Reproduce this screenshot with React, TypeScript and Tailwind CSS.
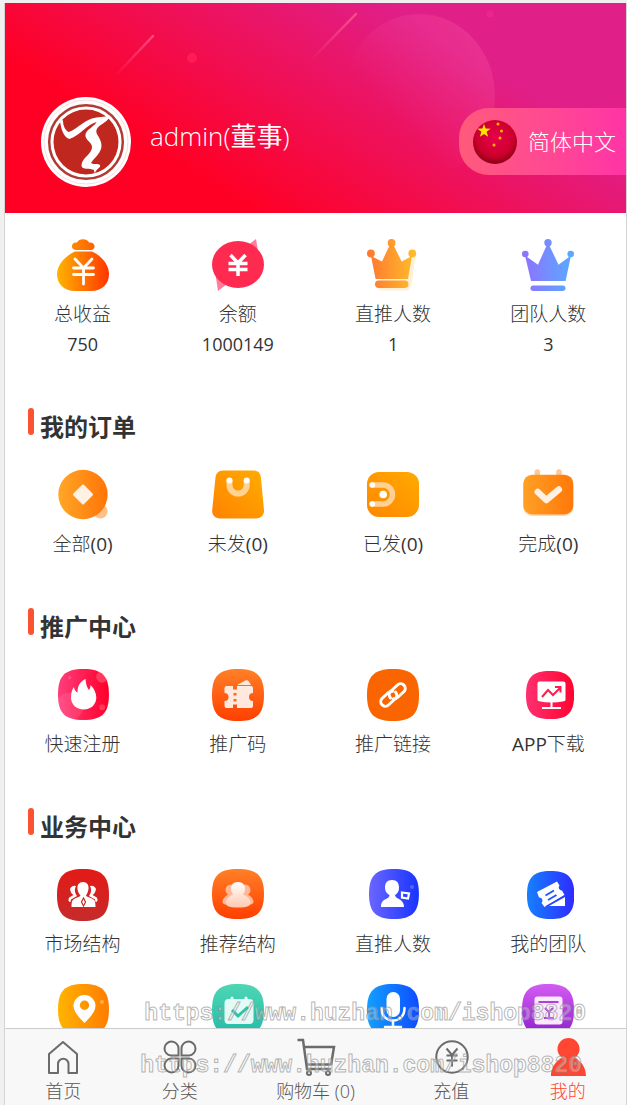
import React from 'react'

interface Tile {
    label?: string;
    value?: string;
    icon: React.ReactNode;
}

const SQUIRCLE = 'M26 0C45 0 52 7 52 26S45 52 26 52 0 45 0 26 7 0 26 0Z'

const Icon = ({ children }: { children: React.ReactNode }) => (
    <svg viewBox="0 0 52 52" className="h-[52px] w-[52px]" aria-hidden="true">{children}</svg>
)

// linear gradient between two colours, horizontal unless `down` or `diag` is set
const Grad = ({ id, from, to, down, diag }: { id: string; from: string; to: string; down?: boolean; diag?: boolean }) => (
    <linearGradient id={id} x1="0" y1={diag ? '1' : '0'} x2={down ? '0' : '1'} y2={down ? '1' : '0'}>
        <stop offset="0" stopColor={from} />
        <stop offset="1" stopColor={to} />
    </linearGradient>
)

const stats: Tile[] = [
    {
        label: '总收益', value: '750', icon: (
            <Icon>
                <Grad id="bag" from="#ffb400" to="#ff3600" />
                <Grad id="knot" from="#ff8a00" to="#ff6200" />
                <path d="M18.500 11c-5.500-.5-4.500-8.500 1.500-7.500C21.500-1 30.500-1 32 3.500c6.500-1 7.500 7 2 7.500Z" fill="url(#knot)" />
                <path d="M18 12.500h17C45 17 52 26 52 35c0 10-7 17-18 17H18C7 52 0 45 0 35 0 26 8 17 18 12.500Z" fill="url(#bag)" />
                <path d="M18 20l8.500 9 8.500-9M16.500 29h20M16.500 35.500h20M26.500 29v16" stroke="#fff" strokeWidth="2.800" strokeLinecap="round" fill="none" />
            </Icon>
        )
    },
    {
        label: '余额', value: '1000149', icon: (
            <Icon>
                <path d="M36 6L44 0l3 18ZM3 32l3 20 9-7Z" fill="#ff7d98" />
                <ellipse cx="26" cy="25.500" rx="26" ry="23.500" fill="#ff2a4f" />
                <path d="M18.500 16l7.500 8 7.500-8M16.500 24.500h19M16.500 30.500h19M26 24v13" stroke="#fff" strokeWidth="3.500" fill="none" />
            </Icon>
        )
    },
    {
        label: '直推人数', value: '1', icon: (
            <Icon>
                <linearGradient id="crown1" gradientUnits="userSpaceOnUse" x1="0" y1="0" x2="49" y2="0">
                    <stop offset="0" stopColor="#ff7530" />
                    <stop offset="1" stopColor="#ffbe2b" />
                </linearGradient>
                <path d="M12 42l33-22 4-6-4 30-4 7.500H12Z" fill="#ffe9c8" opacity=".7" />
                <g fill="url(#crown1)">
                    <circle cx="3.900" cy="14.500" r="3.900" />
                    <circle cx="24.600" cy="3.900" r="3.900" />
                    <circle cx="45.300" cy="14.500" r="3.900" />
                    <path d="M4 17l11 5.500 7.500-16h4.200l8 16L45 17l-4 23H8.600Z" />
                    <rect x="8" y="41.500" width="33.500" height="7.500" rx="3.700" />
                </g>
            </Icon>
        )
    },
    {
        label: '团队人数', value: '3', icon: (
            <Icon>
                <linearGradient id="crown2" gradientUnits="userSpaceOnUse" x1="0" y1="0" x2="52" y2="0">
                    <stop offset="0" stopColor="#9070ff" />
                    <stop offset="1" stopColor="#58acff" />
                </linearGradient>
                <g fill="url(#crown2)">
                    <circle cx="3.300" cy="15" r="3.300" />
                    <circle cx="26" cy="3.700" r="3.700" />
                    <circle cx="48.700" cy="15" r="3.300" />
                    <path d="M3 16.500l13 9.200 8.500-19h3l9 19L49 16.500 43.600 42H9Z" />
                    <rect x="8.500" y="46.500" width="35" height="5.500" rx="2.700" />
                </g>
            </Icon>
        )
    },
]

const orders: Tile[] = [
    {
        label: '全部(0)', icon: (
            <Icon>
                <Grad id="coin" from="#ffa726" to="#ff7408" />
                <circle cx="43.500" cy="42.500" r="7" fill="#ffc08a" />
                <circle cx="26" cy="25.500" r="24.700" fill="url(#coin)" />
                <rect x="18.500" y="18" width="15" height="15" rx="1.500" transform="rotate(45 26 25.500)" fill="#fff1e3" />
            </Icon>
        )
    },
    {
        label: '未发(0)', icon: (
            <Icon>
                <Grad id="shop" from="#ff8200" to="#ffad00" diag />
                <path d="M11 1.500h30.500c5 0 7 3 7.400 7L52 41c.4 5-3 8.500-8 8.500H8C3 49.500-.4 46 .2 41L3.500 8.500c.4-4 3-7 7.500-7Z" fill="url(#shop)" />
                <path d="M17.500 12v4a8.600 8.600 0 0 0 17.200 0v-4" stroke="#ffd393" strokeWidth="6" strokeLinecap="round" fill="none" />
                <circle cx="17.500" cy="11.500" r="3" fill="#fff" />
                <circle cx="34.700" cy="11.500" r="3" fill="#fff" />
            </Icon>
        )
    },
    {
        label: '已发(0)', icon: (
            <Icon>
                <Grad id="wallet" from="#ff8700" to="#ffaa00" diag />
                <rect x="0" y="3" width="52" height="45" rx="12" fill="url(#wallet)" />
                <path d="M5 16h11a9.500 9.500 0 0 1 0 19H5" stroke="#ffd093" strokeWidth="5.500" strokeLinecap="round" fill="none" />
                <circle cx="5.300" cy="16" r="2.800" fill="#fff" />
                <circle cx="5.300" cy="35" r="2.800" fill="#fff" />
                <circle cx="16.200" cy="25.500" r="3.800" fill="#fff" />
            </Icon>
        )
    },
    {
        label: '完成(0)', icon: (
            <Icon>
                <Grad id="done" from="#ffa024" to="#ff780a" />
                <path d="M15.300 3v6M37 3v6" stroke="#ffc796" strokeWidth="5.500" strokeLinecap="round" />
                <rect x="1.300" y="7" width="50" height="40" rx="9" fill="#ffd9b5" />
                <rect x="1.300" y="5.700" width="50" height="39.700" rx="9" fill="url(#done)" />
                <path d="M15.800 23l8.500 8 12.500-10.500" stroke="#fff0e2" strokeWidth="6.500" strokeLinecap="round" strokeLinejoin="round" fill="none" />
            </Icon>
        )
    },
]

const promote: Tile[] = [
    {
        label: '快速注册', icon: (
            <Icon>
                <Grad id="fire" from="#ff3d7d" to="#ff0029" />
                <clipPath id="fireClip"><path d={SQUIRCLE} /></clipPath>
                <g transform="translate(1 0) scale(.98)" clipPath="url(#fireClip)">
                    <rect width="52" height="52" fill="url(#fire)" />
                    <circle cx="12" cy="38" r="14" fill="#fff" opacity=".1" />
                    <circle cx="45" cy="8" r="6" fill="#fff" opacity=".2" />
                    <circle cx="45" cy="39" r="3" fill="#fff" opacity=".2" />
                    <circle cx="12" cy="9" r="1.500" fill="#fff" opacity=".2" />
                </g>
                <path d="M28.500 10c.5 5 1 7.500 3.500 11 1.200-1.500 1.500-3 1.500-5 4 4 5.800 8.500 5.800 12.500 0 7-5.300 12-12.600 12S14 35.500 14 28.500c0-4.500 1.200-8 2.800-10.500.7 3 1.800 4.500 3.700 5.500C20.500 17 23 12.500 28.500 10Z" fill="#fff" />
            </Icon>
        )
    },
    {
        label: '推广码', icon: (
            <Icon>
                <Grad id="code" from="#ff8027" to="#ff3f00" down />
                <path d={SQUIRCLE} fill="url(#code)" />
                <path d="M25 16l9.500-5 2 1 2.500 4Z" fill="#ffe9df" />
                <path d="M14.500 17h6.500v3.500h4V17h14q2 0 2 2v5a4 4 0 0 0 0 8v5q0 2-2 2H25v-3.500h-4V39h-6.500q-2 0-2-2v-5a4 4 0 0 0 0-8v-5q0-2 2-2Z" fill="#ffe9df" />
                <path d="M23 24v2.500M23 30v2.500" stroke="#ff6a20" strokeWidth="3" />
            </Icon>
        )
    },
    {
        label: '推广链接', icon: (
            <Icon>
                <path d={SQUIRCLE} fill="#fb6500" />
                <g stroke="#fff" strokeWidth="3" fill="none" strokeLinecap="round">
                    <path d="M23.500 29a5 5 0 0 1 .5-7l6.500-6a4.600 4.600 0 0 1 6.500 6.500l-6.500 6a4.800 4.800 0 0 1-4 1.200" />
                    <path d="M28.500 23a5 5 0 0 1-.5 7l-6.500 6a4.600 4.600 0 0 1-6.500-6.500l6.500-6a4.800 4.800 0 0 1 4-1.200" />
                </g>
            </Icon>
        )
    },
    {
        label: 'APP下载', icon: (
            <Icon>
                <Grad id="app" from="#ff3070" to="#ff0430" />
                <path d={SQUIRCLE} transform="translate(4 2) scale(.925)" fill="url(#app)" />
                <path d="M17.500 12.500h24q2 0 2 2v16q0 1.500-1.500 1.800-12.500 2.400-25 0-1.500-.3-1.500-1.800v-16q0-2 2-2Z" fill="#fff" />
                <path d="M29.500 33v5M20 39h19" stroke="#fff" strokeWidth="2" />
                <path d="M20 28l6-7 5 5 7-7M33 18h5.500v5.500" stroke="#ff1c4e" strokeWidth="2" fill="none" />
            </Icon>
        )
    },
]

const business: Tile[] = [
    {
        label: '市场结构', icon: (
            <Icon>
                <Grad id="market" from="#e41a15" to="#c52b2b" down />
                <path d={SQUIRCLE} fill="url(#market)" />
                <g fill="#fff">
                    <path d="M13 20a4.500 4.500 0 0 1 6-3c-2 4-1 7 1 10l-6 3.500-.5 2.500H13c-2 0-2-4 0-5l3.500-2c-2-1-3-3-3.500-6ZM39 20a4.500 4.500 0 0 0-6-3c2 4 1 7-1 10l6 3.500.5 2.500h.5c2 0 2-4 0-5l-3.500-2c2-1 3-3 3.500-6Z" />
                    <path d="M26 13c4 0 6 3 5.500 7-.4 3-1.500 5-2.500 6.500 1 2 7 2.500 8.500 5 .8 1.500 1 4.500 1 6.500h-24c0-2 0-5 1-6.500 1.500-2.500 7-3 8-5-1.500-1.500-2.600-3.500-3-6.500C20 16 22 13 26 13Z" />
                </g>
                <path d="M26.500 29l2 4-2 4-2-4Z" stroke="#d32622" strokeWidth="1.200" fill="none" />
            </Icon>
        )
    },
    {
        label: '推荐结构', icon: (
            <Icon>
                <Grad id="rec" from="#ff8027" to="#ff3f00" down />
                <Grad id="recMan" from="#ffffff" to="#ffc9b0" down />
                <path d={SQUIRCLE} transform="scale(1 .96)" fill="url(#rec)" />
                <g fill="#ffb898">
                    <circle cx="19" cy="21" r="5.500" />
                    <circle cx="33" cy="21" r="5.500" />
                    <path d="M10.500 33c0-4 4-7 8.500-9h14c4.500 2 8.500 5 8.500 9 0 2-3 3-6 3h-19c-3 0-6-1-6-3Z" />
                </g>
                <path d="M26 13c5 0 7 3 7 6.500 0 3-1 4.500-2 6 4 2 7 4 7.500 8 .3 3-2.500 5-12.500 5s-12.300-2-12-5c.3-4 3-6 7-8-1-1.500-2-3-2-6C19 16 21 13 26 13Z" fill="url(#recMan)" />
            </Icon>
        )
    },
    {
        label: '直推人数', icon: (
            <Icon>
                <Grad id="direct" from="#6b66ff" to="#1734ff" />
                <path d={SQUIRCLE} transform="translate(2 0) scale(.96)" fill="url(#direct)" />
                <circle cx="45" cy="18" r="2" fill="#5a63ff" />
                <path d="M25 11c5 0 7 3 7 7.500s-2 6.500-4 7.500c0 2 2 3 5 4.500 3 2 4 5 4 7.500H14c0-3 .5-5.500 4-7.500 3-1.500 4.500-2.500 4.500-4.500-2-1-4.500-3-4.500-7.500S20 11 25 11Z" fill="#fff" />
                <path d="M35 23.500l7 1-1 5-6-1Z" stroke="#fff" strokeWidth="2.200" fill="none" />
            </Icon>
        )
    },
    {
        label: '我的团队', icon: (
            <Icon>
                <Grad id="team" from="#1680ff" to="#2e2bff" />
                <path d={SQUIRCLE} transform="translate(5 2) scale(.91 .925)" fill="url(#team)" />
                <path d="M15 23l20-10.500 2.500 4a3 3 0 0 0 2.500 5L42.500 26 22.500 38l-3-4a3.200 3.200 0 0 0-2.500-5.500Z" fill="#fff" />
                <path d="M23.500 26.500l8.500-5M26 31l8.500-5" stroke="#2457ff" strokeWidth="2" />
                <path d="M27 37l16-9v9Z" fill="#fff" />
                <path d="M24 37.500l19-11" stroke="#2a46ff" strokeWidth="1.200" />
            </Icon>
        )
    },
    {
        icon: (
            <Icon>
                <Grad id="pin" from="#ffb400" to="#ff7c00" />
                <path d={SQUIRCLE} transform="translate(1 0) scale(.98)" fill="url(#pin)" />
                <circle cx="45" cy="18" r="2" fill="#ffb13c" />
                <path fillRule="evenodd" d="M27.500 11a11 11 0 0 1 11 11c0 6-6 12-11 17-5-5-11-11-11-17a11 11 0 0 1 11-11Zm0 5.500a4.700 4.700 0 1 0 0 9.400 4.700 4.700 0 0 0 0-9.400Z" fill="#fff" />
            </Icon>
        )
    },
    {
        icon: (
            <Icon>
                <Grad id="sign" from="#4fd6b4" to="#22bca8" down />
                <path d={SQUIRCLE} fill="url(#sign)" />
                <rect x="12.500" y="15" width="29" height="25" rx="4" fill="#e6faf5" />
                <path d="M20 14v4M34 14v4" stroke="#e6faf5" strokeWidth="3" strokeLinecap="round" />
                <path d="M20 26l6 6 10-9" stroke="#2fc3ab" strokeWidth="3" fill="none" />
            </Icon>
        )
    },
    {
        icon: (
            <Icon>
                <Grad id="mic" from="#12a0ff" to="#0e4cff" />
                <path d={SQUIRCLE} fill="url(#mic)" />
                <rect x="19.500" y="8" width="13.500" height="25" rx="6.700" fill="#fff" />
                <path d="M14.500 24c0 8 5 12.500 11.500 12.500S37.500 32 37.500 24M26 36.500V43M18 43h16" stroke="#fff" strokeWidth="2.500" strokeLinecap="round" fill="none" />
            </Icon>
        )
    },
    {
        icon: (
            <Icon>
                <Grad id="doc" from="#d35cf2" to="#8f1fcf" down />
                <path d={SQUIRCLE} fill="url(#doc)" />
                <rect x="12.500" y="12.500" width="28" height="28" rx="3" fill="#fbeaff" />
                <path d="M16.500 18h20M23 24l4 4 4-4M27 28v5M22 34h10" stroke="#b53de0" strokeWidth="2" fill="none" />
            </Icon>
        )
    },
]

const Logo = () => (
    <svg viewBox="0 0 90 90" className="h-[90px] w-[90px] shrink-0" role="img" aria-label="logo">
        <circle cx="45" cy="45" r="45" fill="#fff" />
        <circle cx="45" cy="45" r="42" fill="none" stroke="#f9c9d2" strokeWidth=".7" />
        <circle cx="45" cy="45" r="36.800" fill="none" stroke="#b23a33" strokeWidth="2.500" />
        <circle cx="45" cy="45" r="32.500" fill="#c0281f" />
        <path d="M19.500 24l2.500-1c0 5 1.500 9.500 5.500 12C35 33 41 25 51 21.500c6-2 12-1 18-3-1 5-6 7-10 10-4 3-4.500 6-2.500 9.500 3 5 5 9 3.500 14-2 6-7 9-10 14 3 2 7 0 9 2 1 3-3 3-5 8-1-1-1-2-1-3-4-2-12 0-12.500-4 0-6 5-9 8-13 4-5 3-8-1-12-3-3-4-6-2-9 3-4 8-6 10-10-9 2-16 13-27 17-5-1-8.500-9-9.500-18Z" fill="#fff" />
    </svg>
)

const Flag = () => (
    <svg viewBox="0 0 44 44" className="h-11 w-11 shrink-0" aria-hidden="true">
        <radialGradient id="flag" cx=".5" cy=".4" r=".6">
            <stop offset="0" stopColor="#e8004c" />
            <stop offset=".7" stopColor="#cc002c" />
            <stop offset="1" stopColor="#8a0014" />
        </radialGradient>
        <circle cx="22" cy="22" r="22" fill="url(#flag)" />
        <path d="M11 4l1.600 4.600 5 .2-4 3 1.500 5-4.100-2.900L6.900 16.800l1.500-5-4-3 5-.2Z" fill="#ffe600" />
        <g fill="#ffb400">
            <circle cx="25" cy="4" r="1.500" />
            <circle cx="28.500" cy="11" r="1.500" />
            <circle cx="27" cy="18" r="1.500" />
            <circle cx="21" cy="25" r="1.500" />
        </g>
    </svg>
)

const HeaderArt = () => (
    <svg className="pointer-events-none absolute inset-0 h-full w-full" aria-hidden="true">
        <defs>
            <linearGradient id="orb" x1="0" y1="1" x2="1" y2="0">
                <stop offset=".35" stopColor="#ff60a8" stopOpacity="0" />
                <stop offset="1" stopColor="#ff60a8" stopOpacity=".35" />
            </linearGradient>
            <linearGradient id="streak" x1="0" y1="1" x2="1" y2="0">
                <stop offset="0" stopColor="#ff5a90" stopOpacity="0" />
                <stop offset="1" stopColor="#ff5a90" stopOpacity=".8" />
            </linearGradient>
        </defs>
        <ellipse cx="414" cy="93" rx="76" ry="82" fill="url(#orb)" />
        <path d="M110 73L148 33" stroke="url(#streak)" strokeWidth="2.500" strokeLinecap="round" />
        <path d="M305 58L351 11" stroke="url(#streak)" strokeWidth="2.500" strokeLinecap="round" />
        <circle cx="187" cy="55" r="5" fill="#ff1c55" />
        <circle cx="485" cy="11" r="3.500" fill="#f0248f" />
    </svg>
)

const TileGrid = ({ tiles }: { tiles: Tile[] }) => (
    <div className="grid grid-cols-4 gap-y-[25px]">
        {tiles.map((tile, index) => (
            <a key={index} href="#" className="flex flex-col items-center gap-2 text-[19px] leading-[30px]">
                {tile.icon}
                <span className="flex flex-col items-center">
                    {tile.label && <span>{tile.label}</span>}
                    {tile.value && <span className="text-lg/[30px]">{tile.value}</span>}
                </span>
            </a>
        ))}
    </div>
)

const Section = ({ title, tiles }: { title: string; tiles: Tile[] }) => (
    <section className="mt-[49px]">
        <div className="mb-[25px] flex gap-1.5 pl-[23px]">
            <span className="h-[27px] w-1.5 rounded-full bg-[#fa5332]"></span>
            <h2 className="font-['Noto_Sans_CJK_SC',sans-serif] text-2xl/9 font-bold">{title}</h2>
        </div>
        <TileGrid tiles={tiles} />
    </section>
)

const NavIcon = ({ children }: { children: React.ReactNode }) => (
    <svg viewBox="0 0 40 40" className="h-10 w-10" fill="none" stroke="#6b6b6b" strokeWidth="2" aria-hidden="true">{children}</svg>
)

const navItems = [
    {
        label: '首页',
        icon: <NavIcon><path d="M6 17L20 5l14 12v19h-8.500V27a5 5 0 0 0-10.500 0v9H6Z" strokeLinejoin="round" /></NavIcon>
    },
    {
        label: '分类',
        icon: (
            <NavIcon>
                <path d="M18.500 18.500H11a7 7 0 1 1 7.500-7ZM21.500 18.500H29a7 7 0 1 0-7.500-7ZM18.500 21.500H11a7 7 0 1 0 7.500 7ZM21.500 21.500H29a7 7 0 1 1-7.500 7Z" />
            </NavIcon>
        )
    },
    {
        label: '购物车 (0)',
        icon: (
            <NavIcon>
                <path d="M1.500 3h5.500l4 29h24M8 10h30l-3 18M9.500 27.500H35" strokeWidth="2.500" />
                <circle cx="13" cy="36" r="2" />
                <circle cx="32" cy="36" r="2" />
            </NavIcon>
        )
    },
    {
        label: '充值',
        icon: (
            <NavIcon>
                <circle cx="21" cy="20" r="15.700" />
                <path d="M15.500 11.500l5.500 6.500 5.500-6.500M15.500 18.500h11M15.500 23.500h11M21 18v11.500" />
            </NavIcon>
        )
    },
    {
        label: '我的',
        active: true,
        icon: (
            <NavIcon>
                <g fill="#ff4632" stroke="none">
                    <circle cx="20.500" cy="12" r="11" />
                    <path d="M15 19h11c2 3 12 7 12 20H3c0-13 10-17 12-20Z" />
                </g>
            </NavIcon>
        )
    },
]

const Watermark = () => (
    <span className="whitespace-nowrap font-['Liberation_Mono',monospace] text-[23px] leading-[30px] font-bold text-white/30 [-webkit-text-stroke:1px_#8a8a8aa0]">
        https://www.huzhan.com/ishop8820
    </span>
)

const App = () => {
    return (
        <div className="h-screen bg-[#f0f0f0] pt-[3px] pl-1 font-['Open_Sans','Noto_Sans_CJK_SC_Light','Noto_Sans_CJK_SC',sans-serif] text-[#333]">
            <div className="relative flex h-full flex-col border-x border-[#d3d3d3] bg-white">
                <main className="min-h-0 flex-1 overflow-hidden">
                    <header className="relative flex h-[210px] items-center bg-[linear-gradient(32deg,#ff0024_26%,#e01f88_75%)] pt-[67px] pl-9 text-white">
                        <HeaderArt />
                        <Logo />
                        <p className="relative ml-[19px] pb-3 font-['Open_Sans','Noto_Sans_CJK_SC',sans-serif] text-[26px] leading-9 font-light">
                            admin(<span className="font-normal">董事</span>)
                        </p>
                        <button type="button" className="relative ml-auto flex h-[67px] items-center gap-[11px] rounded-l-[30px] bg-linear-to-r from-[#ff5a7b] to-[#ff33a6] pr-2.5 pl-3.5 text-[22px]">
                            <Flag />
                            简体中文
                        </button>
                    </header>

                    <div className="pt-[26px]">
                        <TileGrid tiles={stats} />
                    </div>
                    <Section title="我的订单" tiles={orders} />
                    <Section title="推广中心" tiles={promote} />
                    <Section title="业务中心" tiles={business} />
                </main>

                <nav className="flex border-t border-[#ccc] bg-[#f8f8f8] pt-2 pb-0.5">
                    {navItems.map((item) => (
                        <a
                            key={item.label}
                            href="#"
                            className={`flex flex-auto flex-col items-center gap-0.5 text-lg/6 font-light ${item.active ? 'text-[#ff4632]' : 'text-[#555]'}`}
                        >
                            {item.icon}
                            <span>{item.label}</span>
                        </a>
                    ))}
                </nav>

                <div className="pointer-events-none absolute right-10 bottom-6 flex flex-col items-end gap-[22px]">
                    <Watermark />
                    <div className="pr-1"><Watermark /></div>
                </div>
            </div>
        </div>
    )
}

export default App
